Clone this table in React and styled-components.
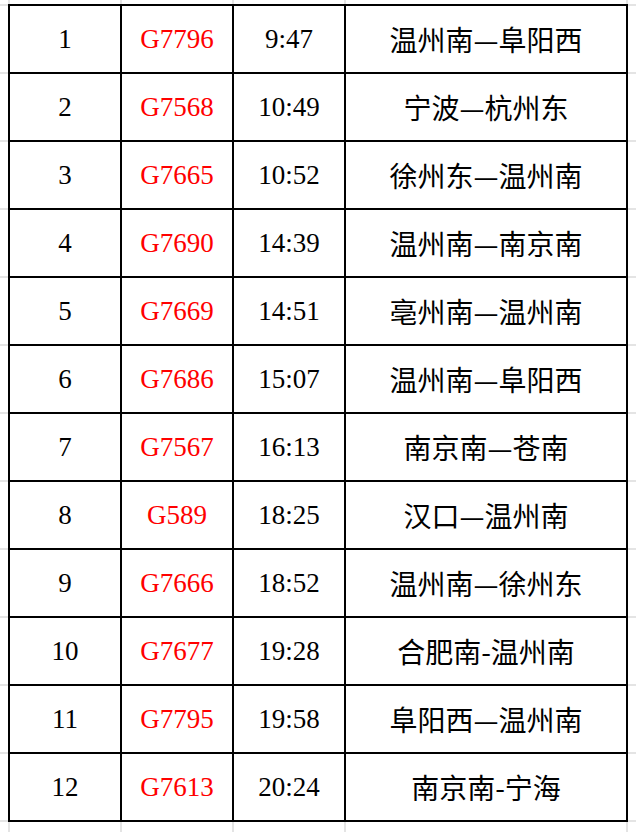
import styled, { createGlobalStyle } from "styled-components";
import { Fragment } from "react";

const GlobalStyle = createGlobalStyle`
  html, body {
    margin: 0;
    padding: 0;
    background: #fff;
  }
`;

const grid = "#e4e4e4";

const Sheet = styled.div`
  width: 636px;
  height: 832px;
  box-sizing: border-box;
  padding: 4px 8px;
  overflow: hidden;
  background-color: #fff;
  background-image:
    linear-gradient(to right, ${grid} 0 2px, transparent 2px),
    linear-gradient(to right, ${grid} 0 2px, transparent 2px),
    linear-gradient(to right, ${grid} 0 2px, transparent 2px),
    linear-gradient(to right, ${grid} 0 2px, transparent 2px),
    linear-gradient(to right, ${grid} 0 2px, transparent 2px),
    repeating-linear-gradient(to bottom, ${grid} 0 2px, transparent 2px 68px);
  background-size: 2px 100%, 2px 100%, 2px 100%, 2px 100%, 2px 100%, 100% 100%;
  background-position: 8px 0, 120px 0, 232px 0, 344px 0, 626px 0, 0 4px;
  background-repeat: no-repeat, no-repeat, no-repeat, no-repeat, no-repeat, repeat-y;
`;

const Table = styled.div`
  display: grid;
  grid-template-columns: 110px 110px 110px 280px;
  grid-auto-rows: 66px;
  gap: 2px;
  padding: 2px;
  width: max-content;
  background: #000;
`;

const Cell = styled.div`
  display: flex;
  align-items: center;
  justify-content: center;
  background: #fff;
  color: ${(p) => (p.$red ? "#ff0000" : "#000")};
  font-family: ${(p) =>
    p.$cjk
      ? '"Noto Sans CJK SC", "Liberation Serif", sans-serif'
      : '"Liberation Serif", "Noto Sans CJK SC", serif'};
  font-size: ${(p) => (p.$cjk ? "28px" : "27px")};
  white-space: nowrap;
`;

const trains = [
  ["1", "G7796", "9:47", "温州南—阜阳西"],
  ["2", "G7568", "10:49", "宁波—杭州东"],
  ["3", "G7665", "10:52", "徐州东—温州南"],
  ["4", "G7690", "14:39", "温州南—南京南"],
  ["5", "G7669", "14:51", "亳州南—温州南"],
  ["6", "G7686", "15:07", "温州南—阜阳西"],
  ["7", "G7567", "16:13", "南京南—苍南"],
  ["8", "G589", "18:25", "汉口—温州南"],
  ["9", "G7666", "18:52", "温州南—徐州东"],
  ["10", "G7677", "19:28", "合肥南-温州南"],
  ["11", "G7795", "19:58", "阜阳西—温州南"],
  ["12", "G7613", "20:24", "南京南-宁海"],
];

export default function App() {
  return (
    <>
      <GlobalStyle />
      <Sheet>
        <Table>
          {trains.map(([no, code, time, route]) => (
            <Fragment key={no}>
              <Cell>{no}</Cell>
              <Cell $red>{code}</Cell>
              <Cell>{time}</Cell>
              <Cell $cjk>{route}</Cell>
            </Fragment>
          ))}
        </Table>
      </Sheet>
    </>
  );
}
